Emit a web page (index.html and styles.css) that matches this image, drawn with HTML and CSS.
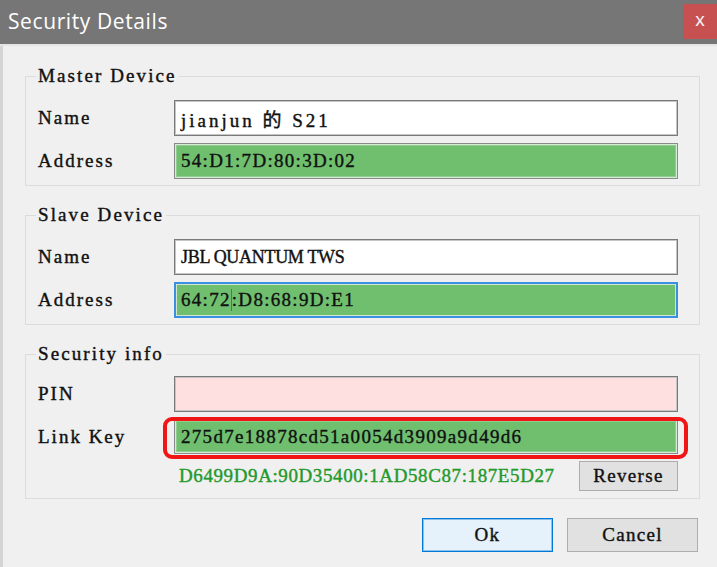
FILE: index.html
```
<!DOCTYPE html>
<html lang="en">

<head>
  <meta charset="UTF-8" />
  <title>Security Details</title>
  <link rel="stylesheet" href="styles.css">
</head>

<body>
  <div class="dialog">
    <div class="titlebar">
      <span class="title">Security Details</span>
      <span class="close">x</span>
    </div>

    <div class="content">
      <fieldset class="group">
        <legend>Master Device</legend>
        <div class="row">
          <label>Name</label>
          <div class="field wide">jianjun 的 S21</div>
        </div>
        <div class="row">
          <label>Address</label>
          <div class="field green">54:D1:7D:80:3D:02</div>
        </div>
      </fieldset>

      <fieldset class="group">
        <legend>Slave Device</legend>
        <div class="row">
          <label>Name</label>
          <div class="field caps">JBL QUANTUM TWS</div>
        </div>
        <div class="row">
          <label>Address</label>
          <div class="field green focus">64:72<span class="caret"></span>:D8:68:9D:E1</div>
        </div>
      </fieldset>

      <fieldset class="group security">
        <legend>Security info</legend>
        <div class="row">
          <label>PIN</label>
          <div class="field pink"></div>
        </div>
        <div class="row">
          <label>Link Key</label>
          <div class="field green short marked">275d7e18878cd51a0054d3909a9d49d6</div>
        </div>
        <div class="hex-row">
          <span class="hex">D6499D9A:90D35400:1AD58C87:187E5D27</span>
          <button class="btn small">Reverse</button>
        </div>
      </fieldset>

      <div class="actions">
        <button class="btn default">Ok</button>
        <button class="btn">Cancel</button>
      </div>
    </div>
  </div>
</body>

</html>
```

FILE: styles.css
```
:root {
  --bg: #f0f0f0;
  --title: #767676;
  --close: #c75050;
  --group-border: #dcdcdc;
  --field-border: #7a7a7a;
  --green: #6fbf6f;
  --pink: #ffe0e0;
  --hex: #23992b;
  --blue: #0078d7;
  --mark: #f01616;
  --mono: "Liberation Serif", "Noto Sans CJK SC", serif;
}

body {
  margin: 0;
  background: var(--bg);
  font-family: var(--mono);
  font-size: 19px;
  letter-spacing: 1.3px;
  color: #111111;
}

.dialog {
  width: 717px;
  height: 567px;
  overflow: hidden;
}

.titlebar {
  height: 44px;
  background: var(--title);
  border-bottom: 2px solid #e4e4e4;
  display: flex;
  justify-content: space-between;
  align-items: flex-start;
}

.title {
  font-family: "Open Sans", "Noto Sans", sans-serif;
  font-size: 21px;
  letter-spacing: 0.6px;
  color: #ffffff;
  margin: 7px 0 0 8px;
  line-height: 28px;
}

.close {
  width: 34px;
  height: 35px;
  margin-top: 4px;
  background: var(--close);
  color: #f4f4f4;
  font-family: "Liberation Sans", sans-serif;
  font-size: 19px;
  letter-spacing: 0;
  line-height: 32px;
  text-align: center;
}

.content {
  height: 521px;
  border-left: 3px solid #d4d4d4;
  padding: 20px 17px 0 22px;
  box-sizing: border-box;
}

.group {
  margin: 0 0 19px 0;
  padding: 14px 21px 6px 12px;
  border: 1px solid var(--group-border);
}

.group legend {
  padding: 0 2px;
  margin-left: -2px;
  line-height: 20px;
  letter-spacing: 2.1px;
  -webkit-text-stroke: 0.4px currentColor;
}

.security {
  padding-top: 12px;
  padding-bottom: 7px;
}

.row {
  display: flex;
  align-items: center;
  margin-bottom: 7px;
}

.row:last-of-type {
  margin-bottom: 0;
}

.row label {
  width: 136px;
  flex-shrink: 0;
  letter-spacing: 2px;
  -webkit-text-stroke: 0.4px currentColor;
}

.field {
  flex: 1;
  height: 36px;
  box-sizing: border-box;
  border: 1px solid var(--field-border);
  box-shadow: inset 0 0 0 1px #c4c4c4;
  background: #ffffff;
  padding: 0 6px;
  display: flex;
  align-items: center;
  white-space: pre;
  -webkit-text-stroke: 0.4px currentColor;
}

.field.wide {
  letter-spacing: 3px;
}

.field.caps {
  font-size: 18px;
  letter-spacing: -0.3px;
}

.field.green {
  background: var(--green);
  box-shadow: inset 0 0 0 1px #d6ecd6, inset 0 0 0 2px #8fce8f;
  border-color: #8a8a8a;
}

.field.focus {
  border: 2px solid #3990e0;
  box-shadow: inset 0 0 0 1px #cfe6cf;
  padding-left: 5px;
}

.field.pink {
  background: var(--pink);
}

.field.short {
  height: 35px;
}

.caret {
  display: inline-block;
  width: 1px;
  height: 22px;
  background: #7a5a8a;
}

.marked {
  position: relative;
}

.marked::after {
  content: "";
  position: absolute;
  left: -12px;
  right: -11px;
  top: -3px;
  bottom: -6px;
  border: 4px solid var(--mark);
  border-radius: 9px;
}

.hex-row {
  display: flex;
  align-items: center;
  justify-content: space-between;
  margin-top: 0;
  padding-left: 141px;
}

.hex {
  color: var(--hex);
  letter-spacing: 0.6px;
  -webkit-text-stroke: 0.4px currentColor;
}

.btn {
  font-family: var(--mono);
  font-size: 19px;
  letter-spacing: 1.3px;
  color: #111111;
  background: #e1e1e1;
  border: 1px solid #adadad;
  width: 131px;
  height: 34px;
  padding: 0;
  -webkit-text-stroke: 0.4px currentColor;
  cursor: pointer;
}

.btn.small {
  width: 99px;
  height: 30px;
}

.btn.default {
  background: #e5f1fb;
  border: 1px solid var(--blue);
  box-shadow: inset 0 0 0 1px #8fc0ec;
}

.actions {
  display: flex;
  justify-content: flex-end;
  gap: 14px;
  padding-right: 2px;
}
```
